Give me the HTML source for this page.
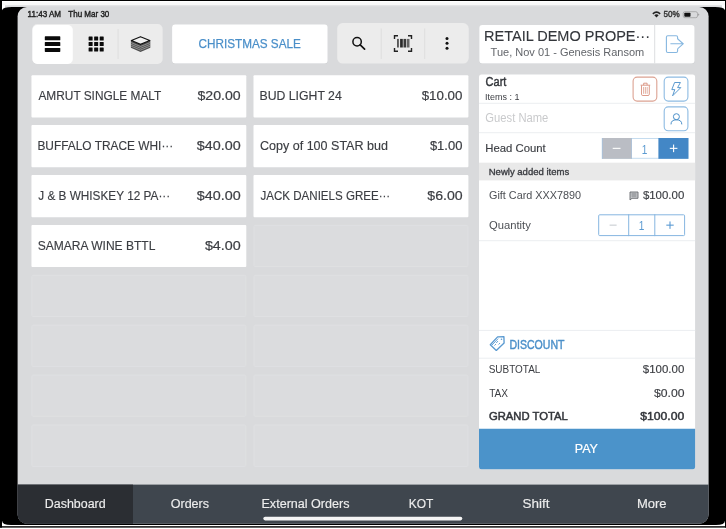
<!DOCTYPE html>
<html><head><meta charset="utf-8"><title>POS</title>
<style>
html,body{margin:0;padding:0}
body{width:726px;height:529px;position:relative;overflow:hidden;background:#fff;font-family:"Liberation Sans",sans-serif}
.t{position:absolute;white-space:pre;line-height:20px;height:20px;font-family:"Liberation Sans",sans-serif}
svg{position:absolute;left:0;top:0}
</style></head><body>
<svg width="726" height="529" viewBox="0 0 726 529">
<defs>
<linearGradient id="tg2" x1="0" y1="0" x2="0" y2="1"><stop offset="0" stop-color="#f8f8f8"/><stop offset="1" stop-color="#dcdddf"/></linearGradient>
<clipPath id="scr"><rect x="17.6" y="7" width="691" height="516.8" rx="9.3" ry="9.3"/></clipPath>
</defs>
<!-- outer frame -->
<rect x="0" y="0" width="726" height="1" fill="#000"/>
<rect x="0" y="0" width="2" height="527.6" fill="#000"/>
<rect x="725" y="0" width="1" height="527.6" fill="#000"/>
<rect x="0" y="526.2" width="726" height="1.4" fill="#000"/>
<rect x="2" y="2.3" width="723" height="2.6" fill="#f8f8f8"/>
<rect x="5" y="4.5" width="717" height="1.2" fill="url(#tg2)"/>
<rect x="5" y="5.6" width="717" height="2" fill="#dcdddf"/>
<!-- device body -->
<path d="M2 10.2 Q3 7 12 7 H715 Q724 7 725 10.2 V520.5 Q725 525 716 525 H11 Q2 525 2 520.5 Z" fill="#000"/>
<!-- screen -->
<g clip-path="url(#scr)">
<rect x="17" y="6" width="693" height="519" fill="#d9dadc"/>
<rect x="17" y="484.6" width="693" height="40" fill="#3f464e"/>
<rect x="17" y="484.6" width="116" height="40" fill="#2b2e33"/>
</g>
<rect x="263.3" y="516.8" width="199" height="3.6" rx="1.8" fill="#f4f4f4"/>

<!-- segmented control -->
<rect x="32.4" y="24.1" width="130.2" height="39.85" rx="5" fill="#ececec"/>
<rect x="32.4" y="25" width="40.4" height="38.95" rx="5" fill="#fff"/>
<rect x="117.6" y="29" width="1" height="30" fill="#dedede"/>
<!-- category button -->
<rect x="172.1" y="25.1" width="155.5" height="39" rx="3" fill="#c9cbce"/>
<rect x="172.1" y="24.55" width="155.5" height="39.05" rx="3" fill="#fff"/>
<!-- right toolbar -->
<rect x="337.2" y="23.1" width="131.5" height="40.5" rx="5.5" fill="#ececec"/>
<rect x="380.7" y="28.5" width="1" height="30.5" fill="#dedede"/>
<rect x="424.2" y="28.5" width="1" height="30.5" fill="#dedede"/>
<!-- header -->
<rect x="479.3" y="25.4" width="215.2" height="38.6" rx="3" fill="#c9cbce"/>
<rect x="479.3" y="24.9" width="215.2" height="38.5" rx="3" fill="#fff"/>
<rect x="654.2" y="24.9" width="1" height="38.5" fill="#dcdee0"/>

<!-- product cards -->
<g fill="#fff">
<rect x="31.45" y="75.2" width="214.85" height="42.2" rx="1"/><rect x="253.5" y="75.2" width="214.9" height="42.2" rx="1"/>
<rect x="31.45" y="125.1" width="214.85" height="42.2" rx="1"/><rect x="253.5" y="125.1" width="214.9" height="42.2" rx="1"/>
<rect x="31.45" y="175" width="214.85" height="42.2" rx="1"/><rect x="253.5" y="175" width="214.9" height="42.2" rx="1"/>
<rect x="31.45" y="224.9" width="214.85" height="42.2" rx="1"/>
</g>
<g fill="#dbdcde" stroke="#dfe0e2" stroke-width="1">
<rect x="254" y="225.4" width="213.9" height="41.2" rx="1"/>
<rect x="31.95" y="275.3" width="213.85" height="41.2" rx="1"/><rect x="254" y="275.3" width="213.9" height="41.2" rx="1"/>
<rect x="31.95" y="325.2" width="213.85" height="41.2" rx="1"/><rect x="254" y="325.2" width="213.9" height="41.2" rx="1"/>
<rect x="31.95" y="375.1" width="213.85" height="41.2" rx="1"/><rect x="254" y="375.1" width="213.9" height="41.2" rx="1"/>
<rect x="31.95" y="425" width="213.85" height="41.4" rx="1"/><rect x="254" y="425" width="213.9" height="41.4" rx="1"/>
</g>

<!-- cart panel -->
<rect x="479" y="74.6" width="216.1" height="394.7" rx="2.5" fill="#fff"/>
<g fill="#eceef1">
<rect x="479" y="102.8" width="216.1" height="1"/>
<rect x="479" y="132.2" width="216.1" height="1"/>
<rect x="479" y="240.2" width="216.1" height="1"/>
<rect x="479" y="329.9" width="216.1" height="1"/>
<rect x="479" y="357.7" width="216.1" height="1"/>
</g>
<rect x="479" y="162.7" width="216.1" height="17.7" fill="#e9e9e9"/>
<path d="M479 428.8 H695.1 V466.8 Q695.1 469.3 692.6 469.3 H481.5 Q479 469.3 479 466.8 Z" fill="#4b93ca"/>
<!-- cart buttons -->
<g fill="none" stroke-width="1.1">
<rect x="633.1" y="77.1" width="23.7" height="24" rx="4" stroke="#dca292"/>
<rect x="664.2" y="77.1" width="23.7" height="24" rx="4" stroke="#8dbbe2"/>
<rect x="664.2" y="106.9" width="23.7" height="23.8" rx="4" stroke="#8dbbe2"/>
</g>
<!-- head count stepper -->
<rect x="602.2" y="138.5" width="85.9" height="19.8" fill="#fff" stroke="#c5dcef" stroke-width="1"/>
<rect x="602.2" y="138" width="29.5" height="20.8" fill="#babdc4"/>
<rect x="602.2" y="138" width=".8" height="20.8" fill="#a9bfd8"/><rect x="631" y="138" width=".8" height="20.8" fill="#a9bfd8"/>
<rect x="658.4" y="138" width="30" height="20.8" fill="#4387c6"/>
<rect x="612.7" y="147.8" width="7.8" height="1.1" fill="#fff"/>
<rect x="669.8" y="147.8" width="7.6" height="1.1" fill="#fff"/>
<rect x="673.05" y="144.55" width="1.1" height="7.6" fill="#fff"/>
<!-- quantity stepper -->
<rect x="598.7" y="214.8" width="85.9" height="20.8" rx="1" fill="none" stroke="#86b6e0" stroke-width="1"/>
<rect x="628.2" y="214.3" width="1" height="21.8" fill="#86b6e0"/>
<rect x="654.3" y="214.3" width="1" height="21.8" fill="#86b6e0"/>
<rect x="609.6" y="224.6" width="7" height="1.1" fill="#c9cdd2"/>
<rect x="666.3" y="224.6" width="7.4" height="1.1" fill="#5b9bd3"/>
<rect x="669.45" y="221.45" width="1.1" height="7.4" fill="#5b9bd3"/>

<!-- list icon -->
<g fill="#0a0a0a">
<rect x="44.8" y="36.3" width="15.5" height="4" rx=".6"/><rect x="44.8" y="42.1" width="15.5" height="4" rx=".6"/><rect x="44.8" y="47.9" width="15.5" height="4" rx=".6"/>
</g>
<!-- grid icon -->
<g fill="#0a0a0a">
<rect x="88.6" y="36.5" width="4" height="4" rx=".5"/><rect x="94.15" y="36.5" width="4" height="4" rx=".5"/><rect x="99.7" y="36.5" width="4" height="4" rx=".5"/>
<rect x="88.6" y="42" width="4" height="4" rx=".5"/><rect x="94.15" y="42" width="4" height="4" rx=".5"/><rect x="99.7" y="42" width="4" height="4" rx=".5"/>
<rect x="88.6" y="47.5" width="4" height="4" rx=".5"/><rect x="94.15" y="47.5" width="4" height="4" rx=".5"/><rect x="99.7" y="47.5" width="4" height="4" rx=".5"/>
</g>
<!-- layers icon -->
<path d="M130.9 40.6 L140.5 44.6 L150.3 40.6 L150.3 47.7 L140.5 51.9 L130.9 47.7 Z" fill="#4e4e4e"/>
<path d="M130.9 42.5 L140.5 46.5 L150.3 42.5 M130.9 44.3 L140.5 48.3 L150.3 44.3 M130.9 46.1 L140.5 50.1 L150.3 46.1" stroke="#c4c4c4" stroke-width=".55" fill="none"/>
<path d="M131.4 40.5 L140.5 36.7 L149.8 40.5 L140.5 44.4 Z" fill="#f1f1f1" stroke="#111" stroke-width="1.2" stroke-linejoin="round"/>
<!-- search -->
<circle cx="357.1" cy="41.8" r="4.2" fill="none" stroke="#111" stroke-width="1.5"/>
<path d="M360.2 44.9 L364.6 49.1" stroke="#111" stroke-width="1.7" stroke-linecap="round"/>
<!-- barcode -->
<path d="M394.5 39 V35.7 H398 M408 35.7 H411.5 V39 M411.5 48 V51.3 H408 M398 51.3 H394.5 V48" fill="none" stroke="#222" stroke-width="1.4"/>
<rect x="397.2" y="38.9" width="1.5" height="8.6" fill="#333"/><rect x="400.1" y="38.9" width="2.7" height="8.6" fill="#2a2a2a"/><rect x="403.5" y="38.9" width="2.7" height="8.6" fill="#3a3a3a"/><rect x="406.9" y="38.9" width="2.6" height="8.6" fill="#666"/>
<!-- dots -->
<circle cx="447" cy="38.4" r="1.5" fill="#111"/><circle cx="447" cy="43.3" r="1.5" fill="#111"/><circle cx="447" cy="48.2" r="1.5" fill="#111"/>
<!-- logout -->
<path d="M677.6 39.2 V37.2 Q677.6 35.8 676.2 35.8 H667.8 Q666.4 35.8 666.4 37.2 V51.1 Q666.4 52.5 667.8 52.5 H676.2 Q677.6 52.5 677.6 51.1 V48.4" fill="none" stroke="#86b7e0" stroke-width="1.1"/>
<path d="M670.4 43.8 H683 M677.8 39 L683.2 43.8 L677.8 48.6" fill="none" stroke="#86b7e0" stroke-width="1.1"/>
<!-- trash -->
<g fill="none" stroke="#d9907d" stroke-width=".9">
<path d="M640.6 85.2 H650.2 M643.7 85.2 V83.2 H647.1 V85.2"/>
<path d="M641.5 85.4 V94.2 Q641.5 95.5 642.8 95.5 H648 Q649.3 95.5 649.3 94.2 V85.4"/>
<path d="M643.6 87 V93.8 M645.4 87 V93.8 M647.2 87 V93.8" stroke-width=".7"/>
</g>
<!-- lightning -->
<path d="M674.6 82.5 H680.4 L677.6 87.6 H680.8 L672.6 95.8 L674.8 89.6 H671.8 Z" fill="none" stroke="#4a8fc9" stroke-width=".9" stroke-linejoin="round"/>
<!-- person -->
<circle cx="676.4" cy="116.7" r="3" fill="none" stroke="#4a8fc9" stroke-width="1"/>
<path d="M671 124.4 Q671 119.8 676.4 119.8 Q681.8 119.8 681.8 124.4" fill="none" stroke="#4a8fc9" stroke-width="1"/>
<!-- note icon -->
<path d="M630 192 H638 V198.3 H632 L630 200 Z" fill="#c4c6c9" stroke="#696c71" stroke-width=".9"/>
<path d="M631.6 194 H636.4 M631.6 196 H636.4" stroke="#6f7277" stroke-width=".8"/>
<!-- discount tag -->
<path d="M490.3 344.7 L497.6 336.9 L503.9 336.6 L504.1 342.9 L496.3 350.4 Z" fill="none" stroke="#5a9ad1" stroke-width="1.35" stroke-linejoin="round"/>
<path d="M492 345 L498.2 338.6 M494.4 345.6 L496 344 M496.2 343 L498 341 M498.6 344.5 L500 343" fill="none" stroke="#5a9ad1" stroke-width=".9"/>
<circle cx="501.5" cy="339.3" r=".8" fill="#5a9ad1"/>
<!-- status: wifi, battery -->
<path d="M652.3 13.2 Q656.5 9.4 660.7 13.2 L659.6 14.4 Q656.5 11.6 653.4 14.4 Z M654.3 15.2 Q656.5 13.3 658.7 15.2 L656.5 17.5 Z" fill="#222"/>
<rect x="683.2" y="11.7" width="14.3" height="6" rx="1.7" fill="none" stroke="#999" stroke-width=".7"/>
<rect x="684.3" y="12.7" width="6.2" height="4" rx=".8" fill="#111"/>
<path d="M698.2 13.6 Q699.3 14 699.3 14.7 Q699.3 15.4 698.2 15.8 Z" fill="#999"/>
</svg>

<div style="position:absolute;left:0;top:0;width:726px;height:529px;will-change:opacity;opacity:.999">
<span class="t" style="left:27px;top:4px;font-size:8.5px;color:#222;-webkit-text-stroke:0.4px #222;transform:translateX(0.59px) scaleX(0.9469);transform-origin:0 50%">11:43 AM</span>
<span class="t" style="left:68px;top:4px;font-size:8.5px;color:#222;-webkit-text-stroke:0.4px #222;transform:translateX(0.30px) scaleX(0.9432);transform-origin:0 50%">Thu Mar 30</span>
<span class="t" style="left:663px;top:4px;font-size:8.5px;color:#333;-webkit-text-stroke:0.4px #333;transform:translateX(0.55px) scaleX(0.9552);transform-origin:0 50%">50%</span>
<span class="t" style="left:198px;top:34px;font-size:13.5px;color:#4a8fc9;-webkit-text-stroke:0.25px #4a8fc9;transform:translateX(0.45px) scaleX(0.8699);transform-origin:0 50%">CHRISTMAS SALE</span>
<span class="t" style="left:484px;top:26px;font-size:14.5px;color:#33363b;-webkit-text-stroke:0.12px #33363b;transform:translateX(0.03px) scaleX(1.0001);transform-origin:0 50%">RETAIL DEMO PROPE···</span>
<span class="t" style="left:490px;top:42px;font-size:11px;color:#62656a;transform:translateX(0.60px) scaleX(1.0000);transform-origin:0 50%">Tue, Nov 01 - Genesis Ransom</span>
<span class="t" style="left:38px;top:86px;font-size:13px;color:#3b3d42;-webkit-text-stroke:0.15px #3b3d42;transform:translateX(0.45px) scaleX(0.9126);transform-origin:0 50%">AMRUT SINGLE MALT</span>
<span class="t" style="left:197px;top:86px;font-size:12.5px;color:#3b3d42;-webkit-text-stroke:0.19px #3b3d42;transform:translateX(0.50px) scaleX(1.1300);transform-origin:0 50%">$20.00</span>
<span class="t" style="left:37px;top:136px;font-size:13px;color:#3b3d42;-webkit-text-stroke:0.15px #3b3d42;transform:translateX(0.43px) scaleX(0.9144);transform-origin:0 50%">BUFFALO TRACE WHI···</span>
<span class="t" style="left:196px;top:136px;font-size:12.5px;color:#3b3d42;-webkit-text-stroke:0.19px #3b3d42;transform:translateX(0.85px) scaleX(1.1470);transform-origin:0 50%">$40.00</span>
<span class="t" style="left:38px;top:186px;font-size:13px;color:#3b3d42;-webkit-text-stroke:0.15px #3b3d42;transform:translateX(0.20px) scaleX(0.9076);transform-origin:0 50%">J &amp; B WHISKEY 12 PA···</span>
<span class="t" style="left:196px;top:186px;font-size:12.5px;color:#3b3d42;-webkit-text-stroke:0.19px #3b3d42;transform:translateX(0.85px) scaleX(1.1470);transform-origin:0 50%">$40.00</span>
<span class="t" style="left:37px;top:236px;font-size:13px;color:#3b3d42;-webkit-text-stroke:0.15px #3b3d42;transform:translateX(0.70px) scaleX(0.9254);transform-origin:0 50%">SAMARA WINE BTTL</span>
<span class="t" style="left:204px;top:236px;font-size:12.5px;color:#3b3d42;-webkit-text-stroke:0.19px #3b3d42;transform:translateX(0.90px) scaleX(1.1447);transform-origin:0 50%">$4.00</span>
<span class="t" style="left:259px;top:86px;font-size:13px;color:#3b3d42;-webkit-text-stroke:0.15px #3b3d42;transform:translateX(0.48px) scaleX(0.9436);transform-origin:0 50%">BUD LIGHT 24</span>
<span class="t" style="left:421px;top:86px;font-size:12.5px;color:#3b3d42;-webkit-text-stroke:0.19px #3b3d42;transform:translateX(0.70px) scaleX(1.0647);transform-origin:0 50%">$10.00</span>
<span class="t" style="left:259px;top:136px;font-size:13px;color:#3b3d42;-webkit-text-stroke:0.15px #3b3d42;transform:translateX(0.99px) scaleX(0.9637);transform-origin:0 50%">Copy of 100 STAR bud</span>
<span class="t" style="left:429px;top:136px;font-size:12.5px;color:#3b3d42;-webkit-text-stroke:0.19px #3b3d42;transform:translateX(0.90px) scaleX(1.0392);transform-origin:0 50%">$1.00</span>
<span class="t" style="left:260px;top:186px;font-size:13px;color:#3b3d42;-webkit-text-stroke:0.15px #3b3d42;transform:translateX(0.50px) scaleX(0.8889);transform-origin:0 50%">JACK DANIELS GREE···</span>
<span class="t" style="left:427px;top:186px;font-size:12.5px;color:#3b3d42;-webkit-text-stroke:0.19px #3b3d42;transform:translateX(0.35px) scaleX(1.1288);transform-origin:0 50%">$6.00</span>
<span class="t" style="left:485px;top:72px;font-size:12.5px;color:#33363b;-webkit-text-stroke:0.43px #33363b;transform:translateX(0.60px) scaleX(0.8806);transform-origin:0 50%">Cart</span>
<span class="t" style="left:485px;top:87px;font-size:9px;color:#3b3d42;transform:translateX(0.07px) scaleX(0.9995);transform-origin:0 50%">Items : 1</span>
<span class="t" style="left:485px;top:108px;font-size:12px;color:#c9cacc;transform:translateX(0.34px) scaleX(0.9355);transform-origin:0 50%">Guest Name</span>
<span class="t" style="left:485px;top:138px;font-size:11.5px;color:#3b3d42;-webkit-text-stroke:0.15px #3b3d42;transform:translateX(0.29px) scaleX(0.9835);transform-origin:0 50%">Head Count</span>
<span class="t" style="left:488px;top:162px;font-size:9.5px;color:#3b3d42;-webkit-text-stroke:0.35px #3b3d42;transform:translateX(0.69px) scaleX(1.0043);transform-origin:0 50%">Newly added items</span>
<span class="t" style="left:488px;top:185px;font-size:11.5px;color:#4d5055;transform:translateX(0.99px) scaleX(0.9422);transform-origin:0 50%">Gift Card XXX7890</span>
<span class="t" style="left:642px;top:185px;font-size:11px;color:#3b3d42;-webkit-text-stroke:0.16px #3b3d42;transform:translateX(0.90px) scaleX(1.0400);transform-origin:0 50%">$100.00</span>
<span class="t" style="left:488px;top:215px;font-size:11.5px;color:#4d5055;transform:translateX(0.99px) scaleX(0.9762);transform-origin:0 50%">Quantity</span>
<span class="t" style="left:509px;top:335px;font-size:12px;color:#4a8fc9;-webkit-text-stroke:0.41px #4a8fc9;transform:translateX(0.39px) scaleX(0.8786);transform-origin:0 50%">DISCOUNT</span>
<span class="t" style="left:488px;top:359px;font-size:11.5px;color:#3b3d42;transform:translateX(0.69px) scaleX(0.8661);transform-origin:0 50%">SUBTOTAL</span>
<span class="t" style="left:642px;top:359px;font-size:11px;color:#3b3d42;-webkit-text-stroke:0.16px #3b3d42;transform:translateX(0.85px) scaleX(1.0412);transform-origin:0 50%">$100.00</span>
<span class="t" style="left:489px;top:383px;font-size:11.5px;color:#3b3d42;transform:translateX(0.19px) scaleX(0.8766);transform-origin:0 50%">TAX</span>
<span class="t" style="left:654px;top:383px;font-size:11px;color:#3b3d42;-webkit-text-stroke:0.16px #3b3d42;transform:translateX(0.00px) scaleX(1.1082);transform-origin:0 50%">$0.00</span>
<span class="t" style="left:488px;top:406px;font-size:11.5px;color:#33363b;-webkit-text-stroke:0.5px #33363b;transform:translateX(0.95px) scaleX(0.9792);transform-origin:0 50%">GRAND TOTAL</span>
<span class="t" style="left:640px;top:406px;font-size:11px;color:#33363b;-webkit-text-stroke:0.45px #33363b;transform:translateX(0.15px) scaleX(1.1090);transform-origin:0 50%">$100.00</span>
<span class="t" style="left:574px;top:439px;font-size:13px;color:#fff;-webkit-text-stroke:0.2px #fff;transform:translateX(0.75px) scaleX(0.9616);transform-origin:0 50%">PAY</span>
<span class="t" style="left:641px;top:140px;font-size:12.5px;color:#5a9ad1;transform:translateX(0.68px) scaleX(0.8053);transform-origin:0 50%">1</span>
<span class="t" style="left:638px;top:216px;font-size:12.5px;color:#5a9ad1;transform:translateX(0.68px) scaleX(0.8053);transform-origin:0 50%">1</span>
<span class="t" style="left:44px;top:494px;font-size:12px;color:#eeeeee;-webkit-text-stroke:0.15px #eeeeee;transform:translateX(0.78px) scaleX(1.0361);transform-origin:0 50%">Dashboard</span>
<span class="t" style="left:170px;top:494px;font-size:12px;color:#eeeeee;-webkit-text-stroke:0.15px #eeeeee;transform:translateX(0.69px) scaleX(1.0460);transform-origin:0 50%">Orders</span>
<span class="t" style="left:261px;top:494px;font-size:12px;color:#eeeeee;-webkit-text-stroke:0.15px #eeeeee;transform:translateX(0.48px) scaleX(1.0475);transform-origin:0 50%">External Orders</span>
<span class="t" style="left:408px;top:494px;font-size:12px;color:#eeeeee;-webkit-text-stroke:0.15px #eeeeee;transform:translateX(0.71px) scaleX(0.9949);transform-origin:0 50%">KOT</span>
<span class="t" style="left:522px;top:494px;font-size:12px;color:#eeeeee;-webkit-text-stroke:0.15px #eeeeee;transform:translateX(0.49px) scaleX(1.1247);transform-origin:0 50%">Shift</span>
<span class="t" style="left:636px;top:494px;font-size:12px;color:#eeeeee;-webkit-text-stroke:0.15px #eeeeee;transform:translateX(0.94px) scaleX(1.0820);transform-origin:0 50%">More</span>
</div>
</body></html>
